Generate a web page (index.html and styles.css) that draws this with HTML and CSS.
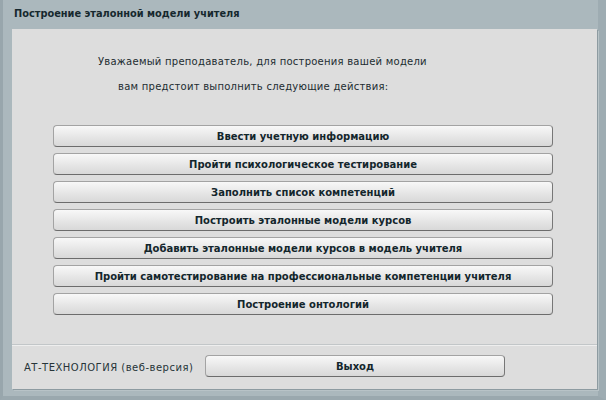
FILE: index.html
```html
<!DOCTYPE html>
<html lang="ru">
<head>
<meta charset="UTF-8">
<title>Построение эталонной модели учителя</title>
<link rel="stylesheet" href="styles.css">
</head>
<body>
<div class="window">
  <div class="title">Построение эталонной модели учителя</div>
  <div class="panel">
    <div class="content">
      <div class="intro">
        <p class="line1">Уважаемый преподаватель, для построения вашей модели</p>
        <p class="line2">вам предстоит выполнить следующие действия:</p>
      </div>
      <div class="actions">
        <button class="button">Ввести учетную информацию</button>
        <button class="button">Пройти психологическое тестирование</button>
        <button class="button">Заполнить список компетенций</button>
        <button class="button">Построить эталонные модели курсов</button>
        <button class="button">Добавить эталонные модели курсов в модель учителя</button>
        <button class="button">Пройти самотестирование на профессиональные компетенции учителя</button>
        <button class="button">Построение онтологий</button>
      </div>
    </div>
    <div class="footer">
      <span class="brand">АТ-ТЕХНОЛОГИЯ (веб-версия)</span>
      <button class="button exit">Выход</button>
    </div>
  </div>
</div>
</body>
</html>
```

FILE: styles.css
```css
  body {
    margin: 0;
    font-family: "DejaVu Sans", Verdana, sans-serif;
    background-color: #a9b6bb;
  }
  .window {
    width: 606px;
    height: 400px;
    box-sizing: border-box;
    background-color: #abb8bd;
    border-left: 3px solid #98a6ac;
    border-right: 8px solid #9eacb2;
    border-bottom: 4px solid #9aa8ae;
  }
  .title {
    height: 29px;
    line-height: 28px;
    padding-left: 11px;
    font-size: 9.8px;
    font-weight: bold;
    color: #16282e;
  }
  .panel {
    margin: 0 1px 0 9px;
    height: 360px;
    background-color: #dddddd;
    box-shadow: 1px 1px 0 #8d9ba1, 2px 2px 0 #b8c3c7;
  }
  .content {
    height: 316px;
    border-bottom: 1px solid #c2c6c8;
    box-sizing: border-box;
    padding-top: 26px;
  }
  .intro p {
    margin: 0;
    font-size: 10px;
    letter-spacing: 0.25px;
    color: #1c2c30;
    height: 25px;
    line-height: 14px;
  }
  .line1 {
    padding-left: 86px;
  }
  .line2 {
    padding-left: 106px;
  }
  .actions {
    margin-top: 20px;
    padding-left: 41px;
    display: flex;
    flex-direction: column;
    gap: 6px;
  }
  .button {
    width: 500px;
    height: 22px;
    padding: 0;
    font-family: "DejaVu Sans", Verdana, sans-serif;
    font-size: 10px;
    font-weight: bold;
    color: #13262c;
    background: linear-gradient(#f8f8f8, #e6e6e6 55%, #d8d8d8);
    border: 1px solid #a3a3a3;
    border-right-color: #777777;
    border-bottom-color: #6c6c6c;
    border-radius: 4px;
    cursor: pointer;
  }
  .footer {
    height: 44px;
    display: flex;
    align-items: center;
    padding-left: 12px;
    border-top: 1px solid #eeeeee;
    box-sizing: border-box;
  }
  .brand {
    font-size: 10px;
    letter-spacing: 0.5px;
    color: #263438;
    width: 181px;
  }
  .exit {
    width: 300px;
    margin-top: -3px;
  }
```
